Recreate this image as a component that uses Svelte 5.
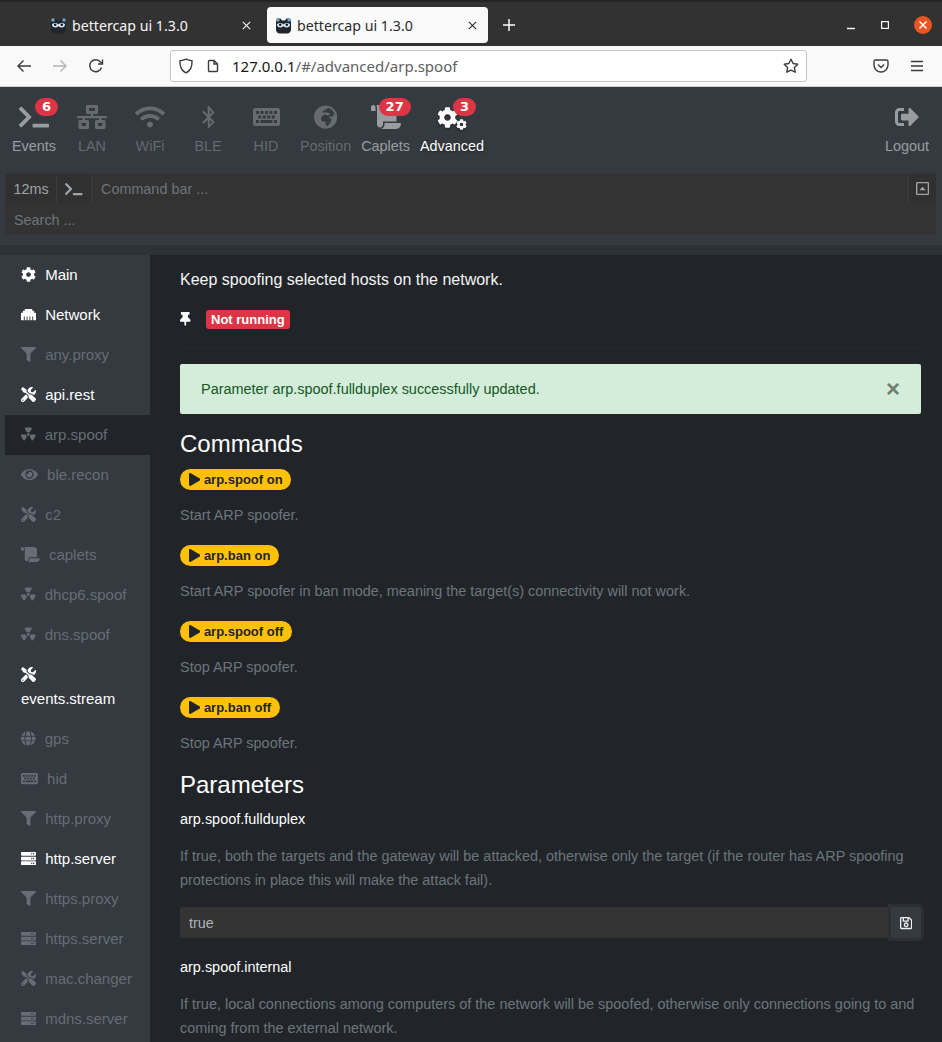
<script lang="ts">
  const keyHoles = [
    [64, 128, 64], [160, 128, 64], [256, 128, 64], [352, 128, 64], [448, 128, 64],
    [112, 224, 64], [208, 224, 64], [304, 224, 64], [400, 224, 64],
    [64, 320, 64], [160, 320, 256], [448, 320, 64],
  ]
    .map(([x, y, w]) => `M${x} ${y}v64h${w}v-64z`)
    .join('');

  const icons = {
    cog: [512, 'M487.4 315.7l-42.6-24.6c4.3-23.2 4.3-47 0-70.2l42.6-24.6c4.9-2.8 7.1-8.6 5.5-14-11.1-35.6-30-67.8-54.7-94.6-3.8-4.1-10-5.1-14.8-2.3L380.8 110c-17.9-15.4-38.5-27.3-60.8-35.1V25.8c0-5.6-3.9-10.5-9.4-11.7-36.7-8.2-74.3-7.8-109.2 0-5.5 1.2-9.4 6.1-9.4 11.7V75c-22.2 7.9-42.8 19.8-60.8 35.1L88.7 85.5c-4.9-2.8-11-1.9-14.8 2.3-24.7 26.7-43.6 58.9-54.7 94.6-1.7 5.4.6 11.2 5.5 14L67.3 221c-4.3 23.2-4.3 47 0 70.2l-42.6 24.6c-4.9 2.8-7.1 8.6-5.5 14 11.1 35.6 30 67.8 54.7 94.6 3.8 4.1 10 5.1 14.8 2.3l42.6-24.6c17.9 15.4 38.5 27.3 60.8 35.1v49.2c0 5.6 3.9 10.5 9.4 11.7 36.7 8.2 74.3 7.8 109.2 0 5.5-1.2 9.4-6.1 9.4-11.7v-49.2c22.2-7.9 42.8-19.8 60.8-35.1l42.6 24.6c4.9 2.8 11 1.9 14.8-2.3 24.7-26.7 43.6-58.9 54.7-94.6 1.5-5.5-.7-11.3-5.6-14.1zM256 336c-44.1 0-80-35.9-80-80s35.9-80 80-80 80 35.9 80 80-35.9 80-80 80z'],
    terminal: [640, 'M257.981 272.971L63.638 467.314c-9.373 9.373-24.569 9.373-33.941 0L7.029 444.647c-9.357-9.357-9.375-24.522-.04-33.901L161.011 256 6.99 101.255c-9.335-9.379-9.317-24.544.04-33.901l22.667-22.667c9.373-9.373 24.569-9.373 33.941 0L257.981 239.03c9.373 9.372 9.373 24.568 0 33.941zM640 456v-32c0-13.255-10.745-24-24-24H312c-13.255 0-24 10.745-24 24v32c0 13.255 10.745 24 24 24h304c13.255 0 24-10.745 24-24z'],
    lan: [640, 'M640 264v-16c0-8.84-7.16-16-16-16H344v-40h72c17.67 0 32-14.33 32-32V32c0-17.67-14.33-32-32-32H224c-17.67 0-32 14.33-32 32v128c0 17.67 14.33 32 32 32h72v40H16c-8.84 0-16 7.16-16 16v16c0 8.84 7.16 16 16 16h104v40H64c-17.67 0-32 14.33-32 32v128c0 17.67 14.33 32 32 32h160c17.67 0 32-14.33 32-32V352c0-17.67-14.33-32-32-32h-56v-40h304v40h-56c-17.67 0-32 14.33-32 32v128c0 17.67 14.33 32 32 32h160c17.67 0 32-14.33 32-32V352c0-17.67-14.33-32-32-32h-56v-40h104c8.84 0 16-7.16 16-16zM256 128V64h128v64H256zm-64 320H96v-64h96v64zm352 0h-96v-64h96v64z'],
    wifi: [640, 'M634.91 154.88C457.74-8.99 182.19-8.93 5.09 154.88c-6.66 6.16-6.79 16.59-.35 22.98l34.24 33.97c6.14 6.1 16.02 6.23 22.4.38 145.92-133.68 371.3-133.71 517.25 0 6.38 5.85 16.26 5.71 22.4-.38l34.24-33.97c6.43-6.39 6.3-16.82-.36-22.98zM320 352c-35.35 0-64 28.65-64 64s28.65 64 64 64 64-28.65 64-64-28.65-64-64-64zm202.67-83.59c-115.26-101.93-290.21-101.82-405.34 0-6.9 6.1-7.12 16.69-.57 23.15l34.44 33.99c6 5.92 15.66 6.32 22.05.8 83.95-72.57 209.74-72.41 293.49 0 6.39 5.52 16.05 5.13 22.05-.8l34.44-33.99c6.56-6.46 6.33-17.06-.56-23.15z'],
    bluetooth: [320, 'M196.48 260.023l92.626-103.333L143.125 0v206.33l-86.111-86.111-31.406 31.405 108.061 108.399L25.608 368.422l31.406 31.405 86.111-86.111L145.84 512l148.552-148.644-97.912-103.333zm40.86-102.996l-49.977 49.978-.338-100.295 50.315 50.317zM187.363 313.04l49.977 49.978-50.315 50.316.338-100.294z'],
    keyboard: [576, 'M48 64h480c26.51 0 48 21.49 48 48v288c0 26.51-21.49 48-48 48H48c-26.51 0-48-21.49-48-48V112c0-26.51 21.49-48 48-48z' + keyHoles],
    africa: [496, 'M248 8C111.03 8 0 119.03 0 256s111.03 248 248 248 248-111.03 248-248S384.97 8 248 8zm160 215.5v6.93c0 5.87-3.32 11.24-8.57 13.86l-15.39 7.7a15.485 15.485 0 0 1-15.53-.97l-18.21-12.14a15.52 15.52 0 0 0-13.5-1.81l-2.65.88c-9.7 3.23-13.66 14.79-7.99 23.3l13.24 19.86c2.87 4.31 7.71 6.9 12.89 6.9h8.21c8.56 0 15.5 6.94 15.5 15.5v11.34c0 3.35-1.09 6.62-3.1 9.3l-18.74 24.98c-1.42 1.9-2.39 4.1-2.83 6.43l-4.3 22.83c-.62 3.29-2.29 6.29-4.76 8.56a159.608 159.608 0 0 0-25 29.16l-13.03 19.55a27.756 27.756 0 0 1-23.09 12.36c-10.51 0-20.12-5.94-24.82-15.34a78.902 78.902 0 0 1-8.33-35.29V367.5c0-8.56-6.94-15.5-15.5-15.5h-25.88c-14.49 0-28.38-5.76-38.63-16a54.659 54.659 0 0 1-16-38.63v-14.06c0-17.19 8.1-33.38 21.85-43.7l27.58-20.69a54.663 54.663 0 0 1 32.78-10.93h.89c8.48 0 16.85 1.97 24.43 5.77l14.72 7.36c3.68 1.84 7.93 2.14 11.83.84l47.31-15.77c6.33-2.11 10.6-8.03 10.6-14.7 0-8.56-6.94-15.5-15.5-15.5h-10.09c-4.11 0-8.05-1.63-10.96-4.54l-6.92-6.92a15.493 15.493 0 0 0-10.96-4.54H199.5c-8.56 0-15.5-6.94-15.5-15.5v-4.4c0-7.11 4.84-13.31 11.74-15.04l14.45-3.61c3.74-.94 7-3.23 9.14-6.44l8.08-12.11c2.87-4.31 7.71-6.9 12.89-6.9h24.21c8.56 0 15.5-6.94 15.5-15.5v-21.7C359.23 71.63 422.86 131.02 441.93 208H423.5c-8.56 0-15.5 6.94-15.5 15.5z'],
    globe: [496, 'M336.5 160C322 70.7 287.8 8 248 8s-74 62.7-88.5 152h177zM152 256c0 22.2 1.2 43.5 3.3 64h185.3c2.1-20.5 3.3-41.8 3.3-64s-1.2-43.5-3.3-64H155.3c-2.1 20.5-3.3 41.8-3.3 64zm324.7-96c-28.6-67.9-86.5-120.4-158-141.6 24.4 33.8 41.2 84.7 50 141.6h108zM177.2 18.4C105.8 39.6 47.8 92.1 19.3 160h108c8.7-56.9 25.5-107.8 49.9-141.6zM487.4 192H372.7c2.1 21 3.3 42.5 3.3 64s-1.2 43-3.3 64h114.6c5.5-20.5 8.6-41.8 8.6-64s-3.1-43.5-8.5-64zM120 256c0-21.5 1.2-43 3.3-64H8.6C3.2 212.5 0 233.8 0 256s3.2 43.5 8.6 64h114.6c-2-21-3.2-42.5-3.2-64zm39.5 96c14.5 89.3 48.7 152 88.5 152s74-62.7 88.5-152h-177zm159.3 141.6c71.4-21.2 129.4-73.7 158-141.6h-108c-8.8 56.9-25.6 107.8-50 141.6zM19.3 352c28.6 67.9 86.5 120.4 158 141.6-24.4-33.8-41.2-84.7-50-141.6h-108z'],
    scroll: [640, 'M48 0C21.53 0 0 21.53 0 48v64c0 8.84 7.16 16 16 16h80V48C96 21.53 74.47 0 48 0zm208 412.57V352h288V96c0-52.94-43.06-96-96-96H111.59C121.74 13.41 128 29.92 128 48v368c0 38.87 34.66 69.65 74.77 63.12C234.27 474 256 444.46 256 412.57zM288 384v32c0 52.93-43.06 96-96 96h336c61.86 0 112-50.14 112-112 0-8.84-7.16-16-16-16H288z'],
    logout: [512, 'M497 273L329 441c-15 15-41 4.5-41-17v-96H152c-13.3 0-24-10.7-24-24v-96c0-13.3 10.7-24 24-24h136V88c0-21.4 25.9-32 41-17l168 168c9.3 9.4 9.3 24.6 0 34zM192 436v-40c0-6.6-5.4-12-12-12H96c-17.7 0-32-14.3-32-32V160c0-17.7 14.3-32 32-32h84c6.6 0 12-5.4 12-12V76c0-6.6-5.4-12-12-12H96c-53 0-96 43-96 96v192c0 53 43 96 96 96h84c6.6 0 12-5.4 12-12z'],
    ethernet: [512, 'M496 192h-48v-48c0-8.8-7.2-16-16-16h-48V80c0-8.8-7.2-16-16-16H144c-8.8 0-16 7.2-16 16v48H80c-8.8 0-16 7.2-16 16v48H16c-8.8 0-16 7.2-16 16v224c0 8.8 7.2 16 16 16h80V320h32v128h64V320h32v128h64V320h32v128h64V320h32v128h80c8.8 0 16-7.2 16-16V208c0-8.8-7.2-16-16-16z'],
    filter: [512, 'M487.976 0H24.028C2.71 0-8.047 25.866 7.058 40.971L192 225.941V432c0 7.831 3.821 15.17 10.237 19.662l80 55.98C298.02 518.69 320 507.493 320 487.98V225.941l184.947-184.97C520.021 25.896 509.338 0 487.976 0z'],
    tools: [512, 'M501.1 395.7L384 278.6c-23.1-23.1-57.6-27.6-85.4-13.9L192 158.1V96L64 0 0 64l96 128h62.1l106.6 106.6c-13.6 27.8-9.2 62.3 13.9 85.4l117.1 117.1c14.6 14.6 38.2 14.6 52.7 0l52.7-52.7c14.5-14.6 14.5-38.2 0-52.7zM331.7 225c28.3 0 54.9 11 74.9 31l19.4 19.4c15.8-6.9 30.8-16.5 43.8-29.5 37.1-37.1 49.7-89.3 37.9-136.7-2.2-9-13.5-12.1-20.1-5.5l-74.4 74.4-67.9-11.3L334 98.9l74.4-74.4c6.6-6.6 3.4-17.9-5.7-20.2-47.4-11.7-99.6.9-136.6 37.9-28.5 28.5-41.9 66.1-41.2 103.6l82.1 82.1c8.1-1.9 16.5-2.9 24.7-2.9zm-103.9 82l-56.7-56.7L18.7 402.8c-25 25-25 65.5 0 90.5s65.5 25 90.5 0l123.6-123.6c-7.6-19.9-9.9-41.6-5-62.7zM64 472c-13.2 0-24-10.8-24-24 0-13.3 10.7-24 24-24s24 10.7 24 24c0 13.2-10.7 24-24 24z'],
    radiation: [496, 'M328.2 255.8h151.6c9.1 0 16.8-7.7 16.2-16.8-5.1-75.8-44.4-142.2-102.5-184.2-7.4-5.3-17.9-2.9-22.7 4.8L290.4 188c22.6 14.3 37.8 39.2 37.8 67.8zm-37.8 67.8c-12.3 7.7-26.8 12.4-42.4 12.4s-30.1-4.7-42.4-12.4L125.2 451.8c-4.9 7.8-2.5 18.2 5.5 22.7C165.5 493.4 205.4 504 248 504s82.5-10.6 117.3-29.5c8-4.5 10.4-14.9 5.5-22.7l-80.4-128.2zM248 303.8c26.5 0 48-21.5 48-48s-21.5-48-48-48-48 21.5-48 48 21.5 48 48 48zm-231.8-48h151.6c0-28.6 15.2-53.5 37.8-67.7L125.2 59.7c-4.9-7.8-15.3-10.2-22.7-4.8C44.4 96.9 5.1 163.3 0 239.1c-.6 9 7.1 16.7 16.2 16.7z'],
    eye: [576, 'M572.52 241.4C518.29 135.59 410.93 64 288 64S57.68 135.64 3.48 241.41a32.35 32.35 0 0 0 0 29.19C57.71 376.41 165.07 448 288 448s230.32-71.64 284.52-177.41a32.35 32.35 0 0 0 0-29.19zM288 400a144 144 0 1 1 144-144 143.93 143.93 0 0 1-144 144zm0-240a95.31 95.31 0 0 0-25.31 3.79 47.85 47.85 0 0 1-66.9 66.9A95.78 95.78 0 1 0 288 160z'],
    server: [512, 'M480 160H32c-17.673 0-32-14.327-32-32V64c0-17.673 14.327-32 32-32h448c17.673 0 32 14.327 32 32v64c0 17.673-14.327 32-32 32zm-48-88c-13.255 0-24 10.745-24 24s10.745 24 24 24 24-10.745 24-24-10.745-24-24-24zm-64 0c-13.255 0-24 10.745-24 24s10.745 24 24 24 24-10.745 24-24-10.745-24-24-24zm112 248H32c-17.673 0-32-14.327-32-32v-64c0-17.673 14.327-32 32-32h448c17.673 0 32 14.327 32 32v64c0 17.673-14.327 32-32 32zm-48-88c-13.255 0-24 10.745-24 24s10.745 24 24 24 24-10.745 24-24-10.745-24-24-24zm-64 0c-13.255 0-24 10.745-24 24s10.745 24 24 24 24-10.745 24-24-10.745-24-24-24zm112 248H32c-17.673 0-32-14.327-32-32v-64c0-17.673 14.327-32 32-32h448c17.673 0 32 14.327 32 32v64c0 17.673-14.327 32-32 32zm-48-88c-13.255 0-24 10.745-24 24s10.745 24 24 24 24-10.745 24-24-10.745-24-24-24zm-64 0c-13.255 0-24 10.745-24 24s10.745 24 24 24 24-10.745 24-24-10.745-24-24-24z'],
    pin: [384, 'M298.028 214.267L285.793 96H328c13.255 0 24-10.745 24-24V24c0-13.255-10.745-24-24-24H56C42.745 0 32 10.745 32 24v48c0 13.255 10.745 24 24 24h42.207L85.972 214.267C37.465 236.82 0 277.261 0 328c0 13.255 10.745 24 24 24h136v104.007c0 1.242.289 2.467.845 3.578l24 48c2.941 5.882 11.364 5.893 14.311 0l24-48a8.008 8.008 0 0 0 .845-3.578V352h136c13.255 0 24-10.745 24-24-.001-51.183-37.983-91.42-85.973-113.733z'],
    save: [448, 'M433.941 129.941l-83.882-83.882A48 48 0 0 0 316.118 32H48C21.49 32 0 53.49 0 80v352c0 26.51 21.49 48 48 48h352c26.51 0 48-21.49 48-48V163.882a48 48 0 0 0-14.059-33.941zM272 80v80H144V80h128zm122 352H54a6 6 0 0 1-6-6V86a6 6 0 0 1 6-6h42v104c0 13.255 10.745 24 24 24h176c13.255 0 24-10.745 24-24V83.882l78.243 78.243a6 6 0 0 1 1.757 4.243V426a6 6 0 0 1-6 6zM224 232c-48.523 0-88 39.477-88 88s39.477 88 88 88 88-39.477 88-88-39.477-88-88-88zm0 128c-22.056 0-40-17.944-40-40s17.944-40 40-40 40 17.944 40 40-17.944 40-40 40z'],
    caretup: [448, 'M400 32H48C21.5 32 0 53.5 0 80v352c0 26.5 21.5 48 48 48h352c26.5 0 48-21.5 48-48V80c0-26.5-21.5-48-48-48zm-6 400H54a6 6 0 0 1-6-6V86a6 6 0 0 1 6-6h340a6 6 0 0 1 6 6v340a6 6 0 0 1-6 6zM112 312L224 200L336 312z'],
    play: [448, 'M424.4 214.7L72.4 6.6C43.8-10.3 0 6.1 0 47.9V464c0 37.5 40.7 60.1 72.4 41.3l352-208c31.4-18.5 31.5-64.1 0-82.6z'],
  };

  const navItems = [
    { label: 'Events', icon: 'terminal', badge: 6, tone: 'on' },
    { label: 'LAN', icon: 'lan', tone: 'off' },
    { label: 'WiFi', icon: 'wifi', tone: 'off' },
    { label: 'BLE', icon: 'bluetooth', tone: 'off' },
    { label: 'HID', icon: 'keyboard', tone: 'off' },
    { label: 'Position', icon: 'africa', tone: 'off' },
    { label: 'Caplets', icon: 'scroll', badge: 27, tone: 'on' },
    { label: 'Advanced', icon: 'cogs', badge: 3, tone: 'active' },
  ];

  const modules = [
    { name: 'Main', icon: 'cog', on: true },
    { name: 'Network', icon: 'ethernet', on: true },
    { name: 'any.proxy', icon: 'filter' },
    { name: 'api.rest', icon: 'tools', on: true },
    { name: 'arp.spoof', icon: 'radiation', current: true },
    { name: 'ble.recon', icon: 'eye' },
    { name: 'c2', icon: 'tools' },
    { name: 'caplets', icon: 'scroll' },
    { name: 'dhcp6.spoof', icon: 'radiation' },
    { name: 'dns.spoof', icon: 'radiation' },
    { name: 'events.stream', icon: 'tools', on: true },
    { name: 'gps', icon: 'globe' },
    { name: 'hid', icon: 'keyboard' },
    { name: 'http.proxy', icon: 'filter' },
    { name: 'http.server', icon: 'server', on: true },
    { name: 'https.proxy', icon: 'filter' },
    { name: 'https.server', icon: 'server' },
    { name: 'mac.changer', icon: 'tools' },
    { name: 'mdns.server', icon: 'server' },
  ];

  const commands = [
    { name: 'arp.spoof on', help: 'Start ARP spoofer.' },
    { name: 'arp.ban on', help: 'Start ARP spoofer in ban mode, meaning the target(s) connectivity will not work.' },
    { name: 'arp.spoof off', help: 'Stop ARP spoofer.' },
    { name: 'arp.ban off', help: 'Stop ARP spoofer.' },
  ];

  const params = [
    {
      name: 'arp.spoof.fullduplex',
      help: 'If true, both the targets and the gateway will be attacked, otherwise only the target (if the router has ARP spoofing protections in place this will make the attack fail).',
      value: 'true',
    },
    {
      name: 'arp.spoof.internal',
      help: 'If true, local connections among computers of the network will be spoofed, otherwise only connections going to and coming from the external network.',
    },
  ];
</script>

{#snippet fa(name, size, cls = '')}
  <svg class="fa {cls}" height={size} width={(icons[name][0] / 512) * size} viewBox="0 0 {icons[name][0]} 512" fill="currentColor" fill-rule="evenodd" aria-hidden="true">
    <path d={icons[name][1]} />
  </svg>
{/snippet}

{#snippet favicon()}
  <svg class="favicon" width="17" height="17" viewBox="0 0 17 17" aria-hidden="true">
    <path d="M2 1.500h3.500l1.500 2h3l1.500-2H15l1 3v8c0 2-1.500 4-4 4H5c-2.500 0-4-2-4-4v-8z" fill="#20262c" />
    <path d="M1.500 1.500h3v3h-3zM12.500 1.500h3v3h-3z" fill="#6fa8d2" />
    <path d="M2 7.500c1-2 5-2 6.500 0c1.500-2 5.500-2 6.500 0c0 2-1.500 3-3.500 3c-1.500 0-2.500-.8-3-1.500c-.5.700-1.500 1.500-3 1.500c-2 0-3.500-1-3.500-3z" fill="#d6e9f6" />
    <circle cx="5.200" cy="7.800" r="1.300" fill="#15191e" />
    <circle cx="11.800" cy="7.800" r="1.300" fill="#15191e" />
  </svg>
{/snippet}

{#snippet tabClose()}
  <svg class="tab-x" width="9" height="9" viewBox="0 0 9 9" stroke="currentColor" stroke-width="1.100" aria-hidden="true"><path d="M.8.800l7.400 7.400M8.200.800L.8 8.200" /></svg>
{/snippet}

<div class="browser">
  <div class="tabstrip">
    <div class="tab">
      {@render favicon()}
      <span class="tab-title">bettercap ui 1.3.0</span>
      {@render tabClose()}
    </div>
    <div class="tab selected">
      {@render favicon()}
      <span class="tab-title">bettercap ui 1.3.0</span>
      {@render tabClose()}
    </div>
    <svg class="plus" width="14" height="14" viewBox="0 0 14 14" stroke="#fff" stroke-width="1.4" aria-hidden="true"><path d="M7 1v12M1 7h12" /></svg>
    <div class="win-btns">
      <svg width="10" height="10" viewBox="0 0 10 10" stroke="#fff" stroke-width="1.4" aria-hidden="true"><path d="M1 8.500h8" /></svg>
      <svg width="10" height="10" viewBox="0 0 10 10" fill="none" stroke="#fff" stroke-width="1.2" aria-hidden="true"><rect x="1.600" y="1.600" width="6.800" height="6.800" /></svg>
      <span class="win-close">
        <svg width="10" height="10" viewBox="0 0 10 10" stroke="#fff" stroke-width="1.500" aria-hidden="true"><path d="M1.500 1.500l7 7M8.500 1.500l-7 7" /></svg>
      </span>
    </div>
  </div>
  <div class="toolbar">
    <svg class="tb-back" width="16" height="16" viewBox="0 0 16 16" fill="none" stroke="#3b3b3d" stroke-width="1.4" aria-hidden="true"><path d="M15 8H2M7.500 2.500L2 8l5.500 5.500" /></svg>
    <svg class="tb-fwd" width="16" height="16" viewBox="0 0 16 16" fill="none" stroke="#b4b4b6" stroke-width="1.4" aria-hidden="true"><path d="M1 8h13M8.500 2.500L14 8l-5.500 5.500" /></svg>
    <svg class="tb-reload" width="16" height="16" viewBox="0 0 16 16" fill="none" stroke="#3b3b3d" stroke-width="1.4" aria-hidden="true"><path d="M13.500 9.500A6 6 0 1 1 12.500 4L14 5.500" /><path d="M14.500 1.500v4.500H10" /></svg>
    <div class="urlbar">
      <svg class="shield" width="16" height="16" viewBox="0 0 16 16" fill="none" stroke="#3b3b3d" stroke-width="1.4" aria-hidden="true"><path d="M8 1.200c2 1 4 1.400 6 1.500c.3 5.500-1.500 10-6 12.100C3.500 12.700 1.700 8.200 2 2.700c2-.1 4-.5 6-1.500z" /></svg>
      <svg class="doc" width="12" height="14" viewBox="0 0 12 14" fill="none" stroke="#3b3b3d" stroke-width="1.4" aria-hidden="true"><path d="M1.500 2.500a1 1 0 0 1 1-1h4.500l3.500 3.500v6.500a1 1 0 0 1-1 1h-7a1 1 0 0 1-1-1z" /><path d="M7 1.500v3.500h3.500" /></svg>
      <span class="url"><b>127.0.0.1</b>/#/advanced/arp.spoof</span>
      <svg class="star" width="16" height="16" viewBox="0 0 16 16" fill="none" stroke="#3b3b3d" stroke-width="1.4" stroke-linejoin="round" aria-hidden="true"><path d="M8 1.200l2.100 4.300 4.700.7-3.400 3.300.8 4.700L8 12.100l-4.200 2.100.8-4.700L1.200 6.200l4.700-.7z" /></svg>
    </div>
    <svg class="pocket" width="16" height="16" viewBox="0 0 16 16" fill="none" stroke="#3b3b3d" stroke-width="1.4" aria-hidden="true"><path d="M2.500 2h11a1.500 1.500 0 0 1 1.500 1.500V7a7 7 0 0 1-14 0V3.500A1.500 1.500 0 0 1 2.500 2z" /><path d="M5 6.500L8 9.500l3-3" /></svg>
    <svg class="menu" width="14" height="12" viewBox="0 0 14 12" stroke="#3b3b3d" stroke-width="1.3" aria-hidden="true"><path d="M1 1.500h12M1 6h12M1 10.500h12" /></svg>
  </div>
</div>

<div class="app">
  <nav class="topnav">
    {#each navItems as item}
      <div class="nav-item {item.tone}">
        <div class="nav-icon">
          {#if item.icon === 'cogs'}
            <span class="cogs">
              {@render fa('cog', 21, 'cog-big')}
              {@render fa('cog', 11, 'cog-small')}
            </span>
          {:else}
            {@render fa(item.icon, 24)}
          {/if}
          {#if item.badge}
            <span class="nav-badge" class:wide={item.badge > 9}>{item.badge}</span>
          {/if}
        </div>
        <span>{item.label}</span>
      </div>
    {/each}
    <div class="nav-item on logout">
      <div class="nav-icon">{@render fa('logout', 24)}</div>
      <span>Logout</span>
    </div>
  </nav>

  <div class="cmdbar">
    <span class="addon ms">12ms</span>
    <span class="addon prompt">{@render fa('terminal', 14)}</span>
    <input class="cmd-input" placeholder="Command bar ..." />
    <span class="addon toggle">{@render fa('caretup', 15)}</span>
  </div>
  <input class="search" placeholder="Search ..." />
  <div class="band"></div>

  <div class="page">
    <aside class="sidebar">
      {#each modules as m}
        <a class="side-link" class:on={m.on} class:current={m.current} href="#/advanced/{m.name}">
          {@render fa(m.icon, 15, m.icon === 'radiation' ? 'flip' : '')}
          {m.name}
        </a>
      {/each}
    </aside>

    <main class="content">
      <p class="lead">Keep spoofing selected hosts on the network.</p>
      <div class="status">
        {@render fa('pin', 14)}
        <span class="not-running">Not running</span>
      </div>
      <hr />

      <div class="alert">
        <span>Parameter arp.spoof.fullduplex successfully updated.</span>
        <span class="alert-x">×</span>
      </div>

      <h3>Commands</h3>
      {#each commands as c}
        <div class="cmd">
          <span class="pill">{@render fa('play', 13)}{c.name}</span>
          <p class="muted">{c.help}</p>
        </div>
      {/each}

      <h3 class="params-title">Parameters</h3>
      {#each params as p}
        <div class="param">
          <div class="param-name">{p.name}</div>
          <p class="muted">{p.help}</p>
          {#if p.value}
            <div class="param-input">
              <input value={p.value} />
              <button aria-label="Save">{@render fa('save', 14)}</button>
            </div>
          {/if}
        </div>
      {/each}
    </main>
  </div>
</div>

<style>
  :global(body) {
    background: #212529;
    overflow: hidden;
    height: 1042px;
    font-family: "Liberation Sans", Arial, sans-serif;
  }

  .fa {
    display: inline-block;
    vertical-align: -2px;
  }

  .flip {
    transform: scaleY(-1);
  }

  /* browser chrome */
  .browser {
    font-family: "Noto Sans", sans-serif;
  }

  .tabstrip {
    display: flex;
    align-items: center;
    height: 46px;
    box-sizing: border-box;
    padding: 2px 0 0 28px;
    background: #333232;
    border-top: 2px solid #242424;
  }

  .tab {
    display: flex;
    align-items: center;
    box-sizing: border-box;
    width: 234px;
    height: 36px;
    margin-right: 5px;
    padding-left: 22px;
    color: #f5f5f5;
    font-size: 14.2px;
    border-radius: 4px;
  }

  .tab.selected {
    width: 221px;
    padding-left: 8px;
    color: #2b2b2d;
    background: #fafafa;
    margin-right: 14px;
  }

  .favicon {
    flex: none;
    margin-right: 5px;
  }

  .tab-title {
    flex: 1;
  }

  .tab-x {
    flex: none;
    margin-right: 11px;
  }

  .win-btns {
    display: flex;
    align-items: center;
    gap: 24px;
    margin-left: auto;
    padding-right: 10px;
  }

  .win-close {
    display: flex;
    align-items: center;
    justify-content: center;
    width: 18px;
    height: 18px;
    border-radius: 50%;
    background: #e95420;
  }

  .toolbar {
    display: flex;
    align-items: center;
    height: 41px;
    box-sizing: border-box;
    padding-left: 16px;
    background: #f9f9fa;
    border-bottom: 1px solid #cfcfd0;
  }

  .tb-fwd {
    margin-left: 20px;
  }

  .tb-reload {
    margin-left: 20px;
  }

  .urlbar {
    display: flex;
    align-items: center;
    box-sizing: border-box;
    width: 637px;
    height: 32px;
    margin: 0 66px 0 66px;
    padding: 0 7px;
    background: #fff;
    border: 1px solid #c5c5c7;
    border-radius: 3px;
  }

  .doc {
    margin-left: 13px;
  }

  .url {
    flex: 1;
    margin-left: 13px;
    font-size: 15px;
    color: #5f6064;
  }

  .url b {
    font-weight: 400;
    color: #17171a;
  }

  .menu {
    margin-left: 21px;
  }

  /* app */
  .app {
    background: #343a40;
  }

  .topnav {
    display: flex;
    gap: 10px;
    height: 86px;
    box-sizing: border-box;
    padding: 13px 11px 0 10px;
    font-size: 14.4px;
  }

  .nav-item {
    display: flex;
    flex-direction: column;
    align-items: center;
    min-width: 48px;
    line-height: 22px;
    color: rgba(255, 255, 255, 0.25);
  }

  .nav-item.on {
    color: rgba(255, 255, 255, 0.5);
  }

  .nav-item.active {
    color: #fff;
    text-shadow: 0 1px 2px rgba(0, 0, 0, 0.5);
  }

  .nav-item.active :global(.fa) {
    filter: drop-shadow(0 1px 1px rgba(0, 0, 0, 0.5));
  }

  .logout {
    margin-left: auto;
  }

  .nav-icon {
    position: relative;
    display: flex;
    justify-content: center;
    align-items: center;
    height: 34px;
    margin-bottom: 1px;
  }

  .cogs {
    position: relative;
    display: block;
    width: 30px;
    height: 24px;
    margin-top: 4px;
  }

  .cogs :global(.fa) {
    position: absolute;
  }

  :global(.cog-big) {
    left: 0;
    top: 0;
  }

  :global(.cog-small) {
    left: 19px;
    top: 12px;
  }

  .nav-badge {
    position: absolute;
    top: -2px;
    left: calc(50% + 1px);
    min-width: 9px;
    padding: 0 7px;
    height: 18px;
    line-height: 18px;
    border-radius: 9px;
    color: #fff;
    background: #dc3545;
    font-size: 13px;
    font-weight: 700;
    font-family: "DejaVu Sans", sans-serif;
    text-align: center;
    text-shadow: none;
  }

  .nav-badge.wide {
    left: calc(50% - 7px);
  }

  .cmdbar {
    display: flex;
    height: 32px;
    margin: 0 6px 0 5px;
    background: #333;
    box-sizing: border-box;
    padding: 1px 0 2px 1px;
  }

  .addon {
    display: flex;
    align-items: center;
    justify-content: center;
    box-sizing: border-box;
    border-right: 1px solid #3a3a3a;
    background: #303030;
    font-size: 14.4px;
    color: #a0a4a8;
  }

  .ms {
    width: 51px;
  }

  .prompt {
    width: 35px;
  }

  .toggle {
    width: 28px;
    border-right: 0;
    border-left: 1px solid #3a3a3a;
    color: #a0a4a8;
  }

  input {
    font-family: inherit;
    border: 0;
    outline: 0;
    background: #333;
    color: #adb5bd;
    font-size: 14.4px;
  }

  input::placeholder {
    color: #6c757d;
    opacity: 1;
  }

  .cmd-input {
    flex: 1;
    min-width: 0;
    padding: 0 9px;
  }

  .search {
    display: block;
    box-sizing: border-box;
    width: 931px;
    height: 30px;
    margin: 0 6px 0 5px;
    padding: 0 9px;
  }

  .band {
    height: 20px;
    background: linear-gradient(#343a40 0 10px, #2d3237 10px);
  }

  .page {
    display: flex;
    align-items: stretch;
    height: 787px;
    overflow: hidden;
  }

  .sidebar {
    flex: none;
    box-sizing: border-box;
    width: 150px;
    padding-left: 5px;
    background: #343a40;
    font-size: 15px;
    line-height: 24px;
  }

  .side-link {
    display: block;
    padding: 8px 16px;
    color: #666d74;
    text-decoration: none;
  }

  .side-link :global(.fa) {
    margin-right: 5px;
  }

  .side-link.on {
    color: #fff;
  }

  .side-link.current {
    background: #212529;
  }

  .content {
    flex: 1;
    min-width: 0;
    box-sizing: border-box;
    padding: 13px 21px 0 30px;
    background: #212529;
    color: #fff;
    font-size: 14.44px;
    line-height: 24px;
  }

  p {
    margin: 0;
  }

  .lead {
    font-size: 16px;
    color: #f4f4f4;
  }

  .status {
    display: flex;
    align-items: center;
    gap: 15px;
    height: 24px;
    margin-top: 15px;
  }

  .not-running {
    height: 19px;
    line-height: 19px;
    padding: 0 5.500px;
    border-radius: 3px;
    background: #dc3545;
    color: #fff;
    font-size: 13px;
    font-weight: 700;
  }

  hr {
    margin: 16px 0 16px;
    border: 0;
    border-top: 1px solid #272b30;
  }

  .alert {
    display: flex;
    justify-content: space-between;
    align-items: center;
    box-sizing: border-box;
    height: 50px;
    padding: 0 21px 0 21px;
    border-radius: 2px;
    background: #d4edda;
    color: #155724;
  }

  .alert-x {
    font-size: 24px;
    font-weight: 700;
    color: #6f7e74;
    line-height: 1;
  }

  h3 {
    margin: 15px 0 11px;
    font-size: 24px;
    font-weight: 500;
    line-height: 29px;
    color: #fff;
  }

  .params-title {
    margin-top: -3px;
    margin-bottom: 8px;
  }

  .cmd {
    margin-bottom: 18px;
  }

  .pill {
    display: inline-flex;
    align-items: center;
    gap: 3.500px;
    height: 21px;
    padding: 0 8.500px 0 9px;
    border-radius: 11px;
    background: #ffc107;
    color: #212529;
    font-size: 13px;
    font-weight: 700;
    line-height: 21px;
    vertical-align: top;
  }

  .cmd p {
    margin-top: 10px;
  }

  .muted {
    color: #6c757d;
  }

  .param-name {
    color: #fff;
    margin-bottom: 13px;
  }

  .param-input {
    display: flex;
    align-items: center;
    margin: 12px 0 14px;
    height: 37px;
  }

  .param-input input {
    flex: 1;
    min-width: 0;
    height: 31px;
    padding: 0 9px;
    border-radius: 3px 0 0 3px;
  }

  .param-input button {
    display: flex;
    align-items: center;
    justify-content: center;
    flex: none;
    width: 36px;
    height: 37px;
    margin-right: -3px;
    padding: 0;
    color: #f0f0f0;
    background: #343a40;
    border: 3px solid #2c3035;
    border-radius: 0 6px 6px 0;
  }
</style>
